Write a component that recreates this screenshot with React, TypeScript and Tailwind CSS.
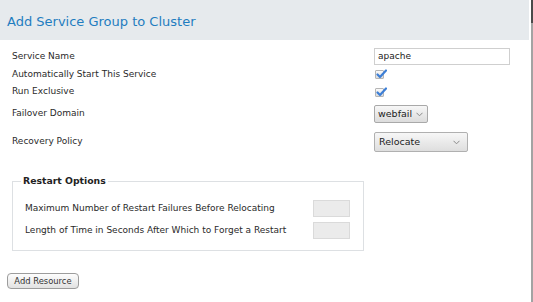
import React from "react";

const font = { fontFamily: '"DejaVu Sans", "Liberation Sans", sans-serif' };

function Check() {
  return (
    <div className="relative w-[9px] h-[9px] border border-[#b5b5b5] bg-gradient-to-b from-[#fafafa] to-[#dcdcdc] rounded-[1px]">
      <svg className="absolute left-[0px] top-[-2px]" width="11" height="10" viewBox="0 0 11 10">
        <path d="M1.5 5.5 L4 8 L10 1.5" fill="none" stroke="#3d7fd6" strokeWidth="2.2" strokeLinecap="round" strokeLinejoin="round" />
      </svg>
    </div>
  );
}

function Chevron() {
  return (
    <svg width="7" height="5" viewBox="0 0 7 5">
      <path d="M0.5 0.8 L3.5 3.8 L6.5 0.8" fill="none" stroke="#8a8a8a" strokeWidth="1" />
    </svg>
  );
}

export default function App() {
  return (
    <div className="w-[533px] h-[302px] bg-white flex overflow-hidden" style={font}>
      <div className="w-[529px] flex flex-col">
        <div className="h-[40px] bg-[#e6eaed] flex items-center pl-[7px] pt-[2px]">
          <span className="text-[13px] text-[#1f7dc0] leading-none">Add Service Group to Cluster</span>
        </div>
        <div className="pl-[12px] pt-[8px] text-[9px] text-[#2a2a2a]">
          <div className="grid grid-cols-[362px_1fr]">
            <div className="h-[17px] flex items-center">Service Name</div>
            <div className="h-[17px] flex">
              <div className="w-[136px] h-[17px] border border-[#cfcfcf] flex items-center pl-[3px] text-[9px] text-[#222]">apache</div>
            </div>
            <div className="h-[19px] flex items-center">Automatically Start This Service</div>
            <div className="h-[19px] flex items-center pl-[1px]"><Check /></div>
            <div className="h-[16px] flex items-center">Run Exclusive</div>
            <div className="h-[16px] flex items-center pl-[1px]"><Check /></div>
            <div className="h-[5px]" /><div className="h-[5px]" />
            <div className="h-[18px] flex items-center">Failover Domain</div>
            <div className="h-[18px] flex">
              <div className="w-[54px] h-[18px] border border-[#a9a9a9] rounded-[2px] bg-gradient-to-b from-[#f7f7f7] to-[#dcdcdc] flex items-center justify-between pl-[3px] pr-[4px] text-[9.5px] text-[#222]">
                <span>webfail</span>
                <Chevron />
              </div>
            </div>
            <div className="h-[9px]" /><div className="h-[9px]" />
            <div className="h-[20px] flex items-center">Recovery Policy</div>
            <div className="h-[20px] flex">
              <div className="w-[94px] h-[20px] border border-[#b0b0b0] rounded-[2px] bg-gradient-to-b from-[#f7f7f7] to-[#dedede] flex items-center justify-between pl-[4px] pr-[7px] text-[9.5px] text-[#222]">
                <span>Relocate</span>
                <Chevron />
              </div>
            </div>
          </div>
          <div className="relative mt-[29px] w-[352px] border border-[#dde0e3] pt-[18px] pb-[11px] pl-[12px] pr-[13px] flex flex-col gap-[5px]">
            <span className="absolute left-[8px] top-[-7px] px-[2px] bg-white font-bold text-[9.3px] text-[#222] leading-[12px]">Restart Options</span>
            <div className="flex items-center justify-between h-[17px]">
              <span>Maximum Number of Restart Failures Before Relocating</span>
              <div className="w-[37px] h-[17px] bg-[#ebebeb] border border-[#dadada]" />
            </div>
            <div className="flex items-center justify-between h-[17px]">
              <span>Length of Time in Seconds After Which to Forget a Restart</span>
              <div className="w-[37px] h-[17px] bg-[#ebebeb] border border-[#dadada]" />
            </div>
          </div>
        </div>
        <div className="pl-[7px] mt-[22px]">
          <div className="w-[72px] h-[16px] rounded-[4px] border border-[#9c9c9c] bg-gradient-to-b from-[#fdfdfd] to-[#e2e2e2] flex items-center justify-center text-[8.4px] text-[#333]">
            Add Resource
          </div>
        </div>
      </div>
      <div className="w-[2px]" />
      <div className="w-[2px] flex flex-col">
        <div className="h-[23px] bg-[#4a4a4a]" />
        <div className="flex-1 bg-[#a3a3a3]" />
      </div>
    </div>
  );
}
